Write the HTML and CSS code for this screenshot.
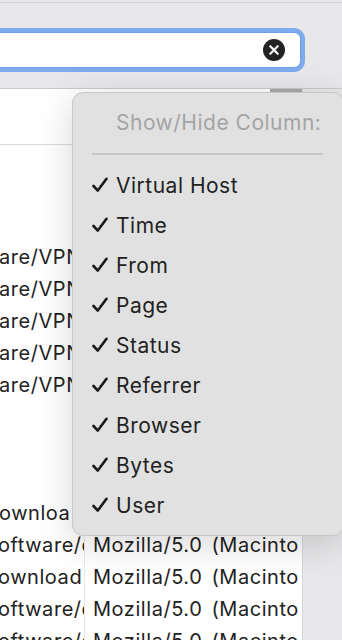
FILE: index.html
```html
<!DOCTYPE html>
<html lang="en">
<head>
    <meta charset="utf-8">
    <link rel="stylesheet" href="styles.css">
</head>
<body>
    <div class="toolbar">
        <div class="topline"></div>
        <div class="search">
            <span class="clear">
                <svg width="22" height="22" viewBox="0 0 22 22">
                    <circle cx="11" cy="11" r="11" fill="#232323"/>
                    <path d="M7.3 7.3 L14.7 14.7 M14.7 7.3 L7.3 14.7" stroke="#fff" stroke-width="2.2" stroke-linecap="round"/>
                </svg>
            </span>
        </div>
    </div>

    <div class="main">
        <div class="table">
            <div class="head"><div class="sort-bar"></div></div>
            <div class="row"></div>
            <div class="row"></div>
            <div class="row"></div>
            <div class="row"><div class="cell wide">are/VPN</div></div>
            <div class="row"><div class="cell wide">are/VPN</div></div>
            <div class="row"><div class="cell wide">are/VPN</div></div>
            <div class="row"><div class="cell wide">are/VPN</div></div>
            <div class="row"><div class="cell wide">are/VPN</div></div>
            <div class="row"></div>
            <div class="row"></div>
            <div class="row"></div>
            <div class="row"><div class="cell wide">ownloa</div></div>
            <div class="row"><div class="cell first">oftware/dl</div><div class="cell">Mozilla/5.0 (Macinto</div></div>
            <div class="row"><div class="cell first">ownload</div><div class="cell">Mozilla/5.0 (Macinto</div></div>
            <div class="row"><div class="cell first">oftware/dl</div><div class="cell">Mozilla/5.0 (Macinto</div></div>
            <div class="row"><div class="cell first">oftware/dl</div><div class="cell">Mozilla/5.0 (Macinto</div></div>
        </div>
        <div class="side"></div>
    </div>

    <!-- column picker menu -->
    <div class="menu">
        <div class="menu-title">Show/Hide Column:</div>
        <div class="menu-sep"></div>
        <div class="menu-item"><svg class="check" viewBox="0 0 16 16"><path d="M1.5 9 L5.8 13.6 L14.5 1.8"/></svg>Virtual Host</div>
        <div class="menu-item"><svg class="check" viewBox="0 0 16 16"><path d="M1.5 9 L5.8 13.6 L14.5 1.8"/></svg>Time</div>
        <div class="menu-item"><svg class="check" viewBox="0 0 16 16"><path d="M1.5 9 L5.8 13.6 L14.5 1.8"/></svg>From</div>
        <div class="menu-item"><svg class="check" viewBox="0 0 16 16"><path d="M1.5 9 L5.8 13.6 L14.5 1.8"/></svg>Page</div>
        <div class="menu-item"><svg class="check" viewBox="0 0 16 16"><path d="M1.5 9 L5.8 13.6 L14.5 1.8"/></svg>Status</div>
        <div class="menu-item"><svg class="check" viewBox="0 0 16 16"><path d="M1.5 9 L5.8 13.6 L14.5 1.8"/></svg>Referrer</div>
        <div class="menu-item"><svg class="check" viewBox="0 0 16 16"><path d="M1.5 9 L5.8 13.6 L14.5 1.8"/></svg>Browser</div>
        <div class="menu-item"><svg class="check" viewBox="0 0 16 16"><path d="M1.5 9 L5.8 13.6 L14.5 1.8"/></svg>Bytes</div>
        <div class="menu-item"><svg class="check" viewBox="0 0 16 16"><path d="M1.5 9 L5.8 13.6 L14.5 1.8"/></svg>User</div>
    </div>
</body>
</html>
```

FILE: styles.css
```css
body {
    font-family: Inter, "Noto Sans", sans-serif;
    margin: 0;
    padding: 0;
    width: 342px;
    height: 640px;
    overflow: hidden;
    background-color: #e8e8ea;
    color: #222;
}
.toolbar {
    height: 88px;
    padding-top: 2px;
    box-sizing: border-box;
}
.topline {
    height: 1px;
    background-color: #d3d3d5;
}
.search {
    margin: 29px 0 0 -20px;
    width: 321px;
    height: 36px;
    box-sizing: border-box;
    background: white;
    border: 1px solid #6e9fe8;
    border-radius: 7px;
    box-shadow: 0 0 0 4px #7eaaee;
    display: flex;
    justify-content: flex-end;
    align-items: center;
    padding-right: 15px;
}
.clear {
    display: flex;
}
.main {
    display: flex;
    border-top: 1px solid #c9c9cb;
    height: 552px;
}
.table {
    width: 302px;
    background: white;
    border-right: 1px solid #d6d6d6;
    font-size: 20px;
    letter-spacing: 0.55px;
}
.head {
    height: 55px;
    border-bottom: 1px solid #dadada;
    display: flex;
    justify-content: flex-end;
    align-items: flex-start;
}
.sort-bar {
    width: 32px;
    height: 3px;
    background-color: #a9a9a9;
}
.side {
    flex: 1;
}
.row {
    height: 32px;
    display: flex;
    align-items: center;
    white-space: nowrap;
    overflow: hidden;
}
.cell {
    overflow: hidden;
}
.cell.wide {
    margin-left: -1px;
    width: 73px;
    flex: none;
}
.cell.first {
    width: 87px;
    flex: none;
    margin-left: -2px;
    padding-right: 2px;
    box-sizing: border-box;
    border-right: 1px solid #e6e6e6;
    height: 32px;
    line-height: 32px;
}
.cell.first + .cell {
    padding-left: 8px;
    word-spacing: 3px;
}
.menu {
    position: absolute;
    left: 72px;
    top: 92px;
    width: 272px;
    box-sizing: border-box;
    padding: 10px 0;
    background-color: #e1e1e1;
    border: 1px solid #c7c7c7;
    border-radius: 11px;
    box-shadow: 0 8px 36px rgba(0,0,0,0.16);
    font-size: 21px;
    letter-spacing: 0.5px;
}
.menu-title {
    height: 40px;
    line-height: 39px;
    padding-left: 43px;
    color: #a4a4a4;
}
.menu-sep {
    height: 2px;
    margin: 10px 20px 10px 19px;
    background-color: #c6c6c6;
}
.menu-item {
    height: 40px;
    display: flex;
    align-items: center;
    padding-left: 19px;
    color: #222;
}
.check {
    width: 16px;
    height: 16px;
    margin-right: 8px;
    fill: none;
    stroke: #1a1a1a;
    stroke-width: 2.6;
    stroke-linecap: round;
    stroke-linejoin: round;
}
```
